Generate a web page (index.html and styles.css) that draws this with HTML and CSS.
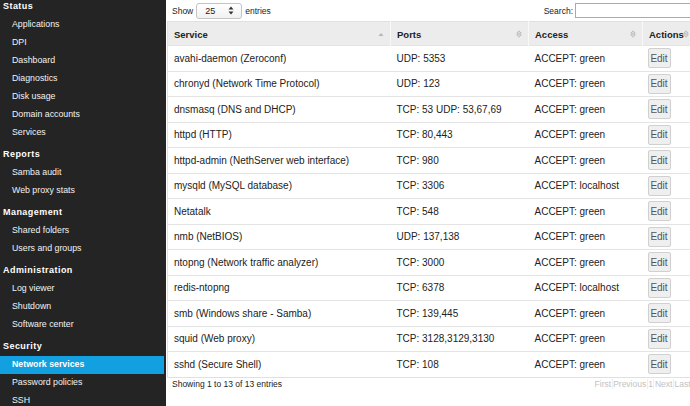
FILE: index.html
```html
<!DOCTYPE html>
<html>
<head>
<meta charset="utf-8">
<link rel="stylesheet" href="styles.css">
</head>
<body>
<div class="layout">
  <nav class="sidebar">
    <div class="group">
      <div class="heading">Status</div>
      <a class="item">Applications</a>
      <a class="item">DPI</a>
      <a class="item">Dashboard</a>
      <a class="item">Diagnostics</a>
      <a class="item">Disk usage</a>
      <a class="item">Domain accounts</a>
      <a class="item">Services</a>
    </div>
    <div class="group">
      <div class="heading">Reports</div>
      <a class="item">Samba audit</a>
      <a class="item">Web proxy stats</a>
    </div>
    <div class="group">
      <div class="heading">Management</div>
      <a class="item">Shared folders</a>
      <a class="item">Users and groups</a>
    </div>
    <div class="group">
      <div class="heading">Administration</div>
      <a class="item">Log viewer</a>
      <a class="item">Shutdown</a>
      <a class="item">Software center</a>
    </div>
    <div class="group">
      <div class="heading">Security</div>
      <a class="item active">Network services</a>
      <a class="item">Password policies</a>
      <a class="item">SSH</a>
    </div>
  </nav>
  <main class="main">
    <div class="toolbar">
      <label class="length">Show <span class="select">25<svg class="spin" width="6" height="9" viewBox="0 0 6 9"><path d="M3 0.5 L5.5 3.5 L0.5 3.5 Z M3 8.5 L5.5 5.5 L0.5 5.5 Z" fill="#333"/></svg></span> entries</label>
      <label class="search">Search:<span class="input"></span></label>
    </div>
    <table class="grid">
      <colgroup>
        <col class="c1"><col class="c2"><col class="c3"><col class="c4">
      </colgroup>
      <thead>
        <tr>
          <th><span>Service</span><svg class="sort" width="6" height="8" viewBox="0 0 6 8"><path d="M3 3 L5.5 6 L0.5 6 Z" fill="#b5b5b5"/></svg></th>
          <th><span>Ports</span><svg class="sort" width="6" height="8" viewBox="0 0 6 8"><path d="M3 0.8 L5.2 3.2 L0.8 3.2 Z M3 7.2 L5.2 4.8 L0.8 4.8 Z" fill="none" stroke="#b0b0b0" stroke-width="0.8"/></svg></th>
          <th><span>Access</span><svg class="sort" width="6" height="8" viewBox="0 0 6 8"><path d="M3 0.8 L5.2 3.2 L0.8 3.2 Z M3 7.2 L5.2 4.8 L0.8 4.8 Z" fill="none" stroke="#b0b0b0" stroke-width="0.8"/></svg></th>
          <th><span>Actions</span><svg class="sort" width="6" height="8" viewBox="0 0 6 8"><path d="M3 0.8 L5.2 3.2 L0.8 3.2 Z M3 7.2 L5.2 4.8 L0.8 4.8 Z" fill="none" stroke="#b0b0b0" stroke-width="0.8"/></svg></th>
        </tr>
      </thead>
      <tbody>
        <tr><td>avahi-daemon (Zeroconf)</td><td>UDP: 5353</td><td>ACCEPT: green</td><td><button class="edit">Edit</button></td></tr>
        <tr><td>chronyd (Network Time Protocol)</td><td>UDP: 123</td><td>ACCEPT: green</td><td><button class="edit">Edit</button></td></tr>
        <tr><td>dnsmasq (DNS and DHCP)</td><td>TCP: 53 UDP: 53,67,69</td><td>ACCEPT: green</td><td><button class="edit">Edit</button></td></tr>
        <tr><td>httpd (HTTP)</td><td>TCP: 80,443</td><td>ACCEPT: green</td><td><button class="edit">Edit</button></td></tr>
        <tr><td>httpd-admin (NethServer web interface)</td><td>TCP: 980</td><td>ACCEPT: green</td><td><button class="edit">Edit</button></td></tr>
        <tr><td>mysqld (MySQL database)</td><td>TCP: 3306</td><td>ACCEPT: localhost</td><td><button class="edit">Edit</button></td></tr>
        <tr><td>Netatalk</td><td>TCP: 548</td><td>ACCEPT: green</td><td><button class="edit">Edit</button></td></tr>
        <tr><td>nmb (NetBIOS)</td><td>UDP: 137,138</td><td>ACCEPT: green</td><td><button class="edit">Edit</button></td></tr>
        <tr><td>ntopng (Network traffic analyzer)</td><td>TCP: 3000</td><td>ACCEPT: green</td><td><button class="edit">Edit</button></td></tr>
        <tr><td>redis-ntopng</td><td>TCP: 6378</td><td>ACCEPT: localhost</td><td><button class="edit">Edit</button></td></tr>
        <tr><td>smb (Windows share - Samba)</td><td>TCP: 139,445</td><td>ACCEPT: green</td><td><button class="edit">Edit</button></td></tr>
        <tr><td>squid (Web proxy)</td><td>TCP: 3128,3129,3130</td><td>ACCEPT: green</td><td><button class="edit">Edit</button></td></tr>
        <tr><td>sshd (Secure Shell)</td><td>TCP: 108</td><td>ACCEPT: green</td><td><button class="edit">Edit</button></td></tr>
      </tbody>
    </table>
    <div class="footer">
      <span class="info">Showing 1 to 13 of 13 entries</span>
      <span class="pager"><span>First</span><span>Previous</span><span>1</span><span>Next</span><span>Last</span></span>
    </div>
  </main>
</div>
</body>
</html>
```
FILE: styles.css
```css
* { box-sizing: border-box; }
html, body {
  margin: 0;
  padding: 0;
  width: 690px;
  height: 406px;
  overflow: hidden;
  background: #fff;
  font-family: "Liberation Sans", Arial, sans-serif;
}
.layout {
  display: grid;
  grid-template-columns: 166px 1fr;
  height: 406px;
}
.sidebar {
  background: #242424;
  color: #fff;
  overflow: hidden;
  padding-top: 0;
}
.group {
  display: flex;
  flex-direction: column;
  margin-bottom: 6px;
}
.heading {
  font-size: 9px;
  font-weight: bold;
  letter-spacing: 0.45px;
  height: 16px;
  line-height: 12px;
  padding-left: 3px;
  color: #fff;
}
.item {
  display: block;
  font-size: 8.8px;
  height: 18px;
  line-height: 16px;
  padding-left: 12px;
  color: #f2f2f2;
  margin-right: 2px;
}
.item.active {
  background: #12a0e0;
  color: #fff;
  font-weight: bold;
}
.main {
  padding-left: 1px;
  overflow: hidden;
  color: #222;
  font-size: 10px;
}
.toolbar {
  display: flex;
  justify-content: space-between;
  align-items: center;
  height: 21px;
  padding-left: 5px;
}
.length {
  display: flex;
  align-items: center;
  gap: 2px;
  font-size: 8.5px;
}
.select {
  display: inline-flex;
  align-items: center;
  justify-content: space-between;
  width: 46px;
  height: 16px;
  border: 1px solid #c4c4c4;
  border-radius: 3px;
  background: linear-gradient(#fff, #f1f1f1);
  padding: 0 7px 0 8px;
  font-size: 9px;
  margin: 0 1px;
}
.search {
  display: flex;
  align-items: center;
  gap: 2px;
  font-size: 8.5px;
  margin-right: -4px;
}
.input {
  display: inline-block;
  width: 119px;
  height: 15px;
  border: 1px solid #aaa;
  background: #fff;
}
.grid {
  border-collapse: collapse;
  width: 528px;
  table-layout: fixed;
  border: 1px solid #e0e0e0;
}
.c1 { width: 223px; }
.c2 { width: 138px; }
.c3 { width: 114px; }
.c4 { width: 53px; }
.grid th {
  background: #ececec;
  font-weight: bold;
  font-size: 9.5px;
  text-align: left;
  height: 24px;
  padding: 0 6px;
  border-left: 1px solid #f8f8f8;
  color: #222;
  position: relative;
}
.grid th:first-child { border-left: none; }
.grid th span { vertical-align: middle; }
.sort {
  position: absolute;
  right: 6px;
  top: 8px;
}
.grid td {
  height: 25.5px;
  padding: 0 6px;
  border-top: 1px solid #e4e4e4;
  font-size: 10px;
  white-space: nowrap;
  background: #fff;
}
.grid td:nth-child(4) { padding-left: 5px; }
.edit {
  font-family: "Liberation Sans", Arial, sans-serif;
  font-size: 10px;
  color: #555;
  background: #efefef;
  border: 1px solid #d0d0d0;
  border-radius: 2px;
  width: 23px;
  height: 20px;
  padding: 0;
  display: block;
}
.footer {
  display: flex;
  justify-content: space-between;
  align-items: center;
  height: 13px;
  padding-left: 5px;
  font-size: 8.5px;
}
.pager {
  display: flex;
  color: #c2c2c2;
  font-size: 8.5px;
  margin-right: -1px;
}
.pager span {
  padding: 0 0.5px;
  border-left: 1px solid #eee;
}
.pager span:first-child { border-left: none; }
```
